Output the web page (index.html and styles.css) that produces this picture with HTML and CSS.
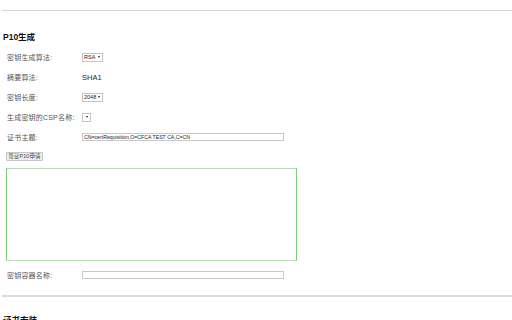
FILE: index.html
```html
<!DOCTYPE html>
<html lang="zh">
<head>
<meta charset="utf-8">
<link rel="stylesheet" href="styles.css">
</head>
<body>
<div class="rule"></div>
<h3 class="title">P10生成</h3>
<div class="form">
  <div class="row"><span class="label">密钥生成算法:</span><span class="select sel-alg"><select><option>RSA</option></select></span></div>
  <div class="row"><span class="label">摘要算法:</span><span class="value">SHA1</span></div>
  <div class="row"><span class="label">密钥长度:</span><span class="select sel-alg"><select><option>2048</option></select></span></div>
  <div class="row"><span class="label">生成密钥的CSP名称:</span><span class="select sel-csp"><select><option></option></select></span></div>
  <div class="row"><span class="label">证书主题:</span><input class="text" type="text" value="CN=certRequisition,O=CFCA TEST CA,C=CN"></div>
</div>
<button class="btn">签证P10申请</button>
<textarea class="area"></textarea>
<div class="row row-container"><span class="label">密钥容器名称:</span><input class="text" type="text"></div>
<div class="rule rule-thick"></div>
<h3 class="title title-next">证书安装</h3>
</body>
</html>
```
FILE: styles.css
```css
html, body {
  margin: 0;
  padding: 0;
  background: #fff;
}
body {
  font-family: "Liberation Sans", "Noto Sans CJK SC", sans-serif;
  font-size: 7px;
  color: #555;
  overflow: hidden;
  height: 320px;
}
.rule {
  margin: 10px 0 0 2px;
  height: 0;
  border-top: 1px solid #d4d4d4;
}
.rule-thick {
  margin-top: 10px;
  border-top: 2px solid #dcdcdc;
}
.title {
  margin: 20px 0 0 3px;
  font-size: 8.5px;
  line-height: 12px;
  font-weight: bold;
  color: #111;
}
.title-next {
  margin-top: 17px;
}
.form {
  margin-top: 4px;
}
.row {
  display: flex;
  align-items: center;
  height: 20px;
}
.label {
  width: 82px;
  padding-left: 7px;
  box-sizing: border-box;
  flex: none;
  letter-spacing: 0.2px;
}
.value {
  font-size: 7.5px;
  color: #222;
}
.select {
  position: relative;
  display: inline-block;
  height: 9px;
  box-sizing: border-box;
  border: 1px solid #c4c4c4;
  background: #fff;
}
.select select {
  appearance: none;
  -webkit-appearance: none;
  border: 0;
  outline: none;
  background: transparent;
  font-family: "Liberation Sans", sans-serif;
  font-size: 5.5px;
  line-height: 7px;
  height: 7px;
  padding: 0 0 0 1px;
  margin: 0;
  color: #222;
  display: block;
  width: 100%;
}
.select::after {
  content: "";
  position: absolute;
  right: 2px;
  top: 2.5px;
  border-left: 1.5px solid transparent;
  border-right: 1.5px solid transparent;
  border-top: 2px solid #222;
}
.sel-alg { width: 21px; }
.sel-csp { width: 9px; }
.sel-csp::after { right: 2.5px; }
.text {
  width: 202px;
  height: 8px;
  box-sizing: border-box;
  border: 1px solid #c8c8c8;
  padding: 0 1px;
  margin: 0;
  font-family: "Liberation Sans", sans-serif;
  font-size: 5.2px;
  color: #222;
}
.btn {
  display: block;
  margin: 5px 0 0 6px;
  width: 37px;
  height: 9px;
  padding: 0;
  font-family: "Liberation Sans", "Noto Sans CJK SC", sans-serif;
  font-size: 5.5px;
  color: #444;
  background: #eeeeee;
  border: 1px solid #c4c4c4;
  border-radius: 1px;
  box-sizing: border-box;
  line-height: 7px;
}
.area {
  display: block;
  margin: 7px 0 0 6px;
  width: 291px;
  height: 93px;
  box-sizing: border-box;
  border: 1px solid #7fcc7f;
  border-top-color: #b5dcb5;
  border-bottom-color: #b5dcb5;
  padding: 0;
  resize: none;
  outline: none;
}
.row-container {
  margin-top: 4px;
}
```
